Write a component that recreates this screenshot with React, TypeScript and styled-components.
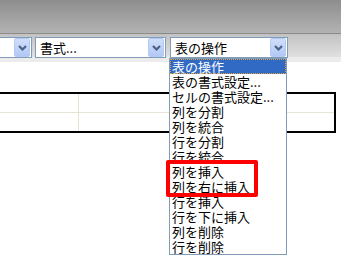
import React from 'react';
import styled, { createGlobalStyle } from 'styled-components';

const GlobalStyle = createGlobalStyle`
  body {
    margin: 0;
    font-family: "Noto Sans CJK JP", "DejaVu Sans", sans-serif;
    background: #ffffff;
  }
`;

const Page = styled.div`
  position: relative;
  width: 341px;
  height: 263px;
  overflow: hidden;
  background: #ffffff;
`;

const TitleBand = styled.div`
  height: 33px;
  background: linear-gradient(#8d8d8d, #b3b3b3);
  border-bottom: 1px solid #8a8a8a;
`;

const Toolbar = styled.div`
  height: 28px;
  display: flex;
  align-items: flex-start;
  gap: 3px;
  padding-top: 3px;
  box-sizing: border-box;
  margin-left: -80px;
  background: linear-gradient(#c2c2c2 0%, #e0e0e0 82%, #ececec 83%, #ececec 100%);
`;

const Combo = styled.div<{ $width: number; $gapLeft?: number }>`
  width: ${p => p.$width}px;
  height: 21px;
  margin-left: ${p => p.$gapLeft || 0}px;
  flex-shrink: 0;
  box-sizing: border-box;
  border: 1px solid #7f9db9;
  background: #ffffff;
  display: flex;
  align-items: center;
  padding: 0 1px 0 4px;
  font-size: 13px;
  line-height: 19px;
  color: #000;
`;

const ComboText = styled.span`
  flex: 1;
  white-space: nowrap;
  overflow: hidden;
`;

const DropButton = styled.div`
  width: 16px;
  height: 19px;
  box-sizing: border-box;
  border: 1px solid #b4c9f3;
  border-radius: 2px;
  background: linear-gradient(#d0defb, #b2c8f5);
  display: flex;
  align-items: center;
  justify-content: center;
`;

const Chevron = () => (
  <svg width="9" height="6" viewBox="0 0 9 6">
    <path d="M1 1 L4.5 4.5 L8 1" fill="none" stroke="#4d6185" strokeWidth="2.2" />
  </svg>
);

const DocArea = styled.div`
  padding-top: 30px;
`;

const DocTable = styled.table`
  margin-left: -40px;
  width: 376px;
  border-collapse: collapse;
  border-top: 2px solid #000;
  border-bottom: 2px solid #000;
  border-right: 2px solid #000;
`;

const Cell = styled.td<{ $w?: number; $h: number; $last?: boolean }>`
  width: ${p => (p.$w ? `${p.$w}px` : 'auto')};
  height: ${p => p.$h}px;
  padding: 0;
  border-right: ${p => (p.$last ? 'none' : '1px solid #e8e4d4')};
`;

const Row = styled.tr<{ $line?: boolean }>`
  border-bottom: ${p => (p.$line ? '1px solid #e8e4d4' : 'none')};
`;

const DropList = styled.ul`
  position: absolute;
  left: 169px;
  top: 58px;
  width: 118px;
  margin: 0;
  padding: 0;
  list-style: none;
  box-sizing: border-box;
  border: 1px solid #7f9db9;
  background: #ffffff;
`;

const Item = styled.li<{ $selected?: boolean }>`
  height: 15px;
  line-height: 15px;
  padding-left: 2px;
  font-size: 13px;
  white-space: nowrap;
  box-sizing: border-box;
  color: ${p => (p.$selected ? '#ffffff' : '#000000')};
  background: ${p => (p.$selected ? '#316ac5' : 'transparent')};
  outline: ${p => (p.$selected ? '1px dotted #e0a040' : 'none')};
  outline-offset: -1px;
`;

const Mark = styled.div`
  position: absolute;
  left: 166px;
  top: 160px;
  width: 92px;
  height: 37px;
  box-sizing: border-box;
  border: 4px solid #ff0000;
  border-radius: 2px;
`;

const items = [
  '表の操作',
  '表の書式設定...',
  'セルの書式設定...',
  '列を分割',
  '列を統合',
  '行を分割',
  '行を統合',
  '列を挿入',
  '列を右に挿入',
  '行を挿入',
  '行を下に挿入',
  '列を削除',
  '行を削除',
];

export default function App() {
  return (
    <Page>
      <GlobalStyle />
      <TitleBand />
      <Toolbar>
        <Combo $width={112}>
          <ComboText></ComboText>
          <DropButton><Chevron /></DropButton>
        </Combo>
        <Combo $width={131}>
          <ComboText>書式...</ComboText>
          <DropButton><Chevron /></DropButton>
        </Combo>
        <Combo $width={118} $gapLeft={1}>
          <ComboText>表の操作</ComboText>
          <DropButton><Chevron /></DropButton>
        </Combo>
      </Toolbar>
      <DocArea>
        <DocTable>
          <tbody>
            <Row $line>
              <Cell $w={118} $h={18} />
              <Cell $h={18} $last />
            </Row>
            <Row>
              <Cell $w={118} $h={18} />
              <Cell $h={18} $last />
            </Row>
          </tbody>
        </DocTable>
      </DocArea>
      <DropList>
        {items.map((t, i) => (
          <Item key={t} $selected={i === 0}>{t}</Item>
        ))}
      </DropList>
      <Mark />
    </Page>
  );
}
